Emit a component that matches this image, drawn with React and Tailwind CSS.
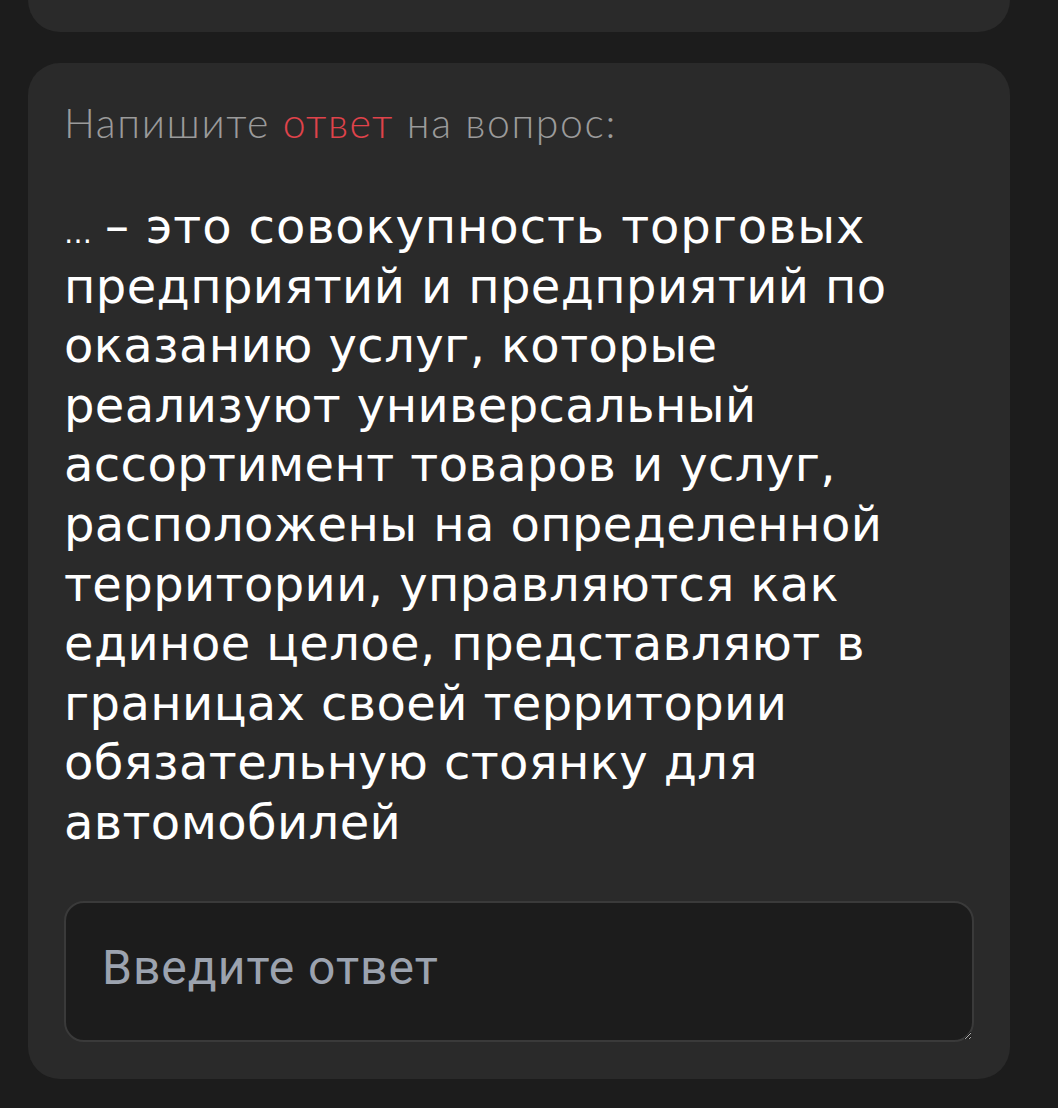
import React from 'react';

const lines = [
  'предприятий и предприятий по',
  'оказанию услуг, которые',
  'реализуют универсальный',
  'ассортимент товаров и услуг,',
  'расположены на определенной',
  'территории, управляются как',
  'единое целое, представляют в',
  'границах своей территории',
  'обязательную стоянку для',
  'автомобилей',
];

const App = () => {
  return (
    <div className="min-h-[1108px] bg-[#1c1c1c] px-[28px] pr-[48px] overflow-hidden">
      {/* previous card, only its bottom shows */}
      <div className="-mt-[60px] h-[92px] rounded-[32px] bg-[#2a2a2a]" />

      <div className="mt-[31px] rounded-[32px] bg-[#2a2a2a] px-[36px] pt-[36px] pb-[37px]">
        <p
          className="text-[41px] font-light leading-[48px] tracking-[1.6px] text-[#9b9b9b]"
          style={{ fontFamily: 'Lato, "Open Sans", sans-serif' }}
        >
          Напишите <span className="text-[#e0434b]">ответ</span> на вопрос:
        </p>

        <div
          className="mt-[50px] text-[48px] leading-[59.6px] tracking-[0.4px] text-white"
          style={{ fontFamily: '"DejaVu Sans", "Noto Sans", sans-serif' }}
        >
          <div className="h-[59.6px] whitespace-nowrap tracking-[0.9px]">
            <span className="mr-[14px] inline-block text-[28px] leading-[0] tracking-[-1px]">…</span>– это совокупность торговых
          </div>
          {lines.map((l) => (
            <div key={l} className="whitespace-nowrap">{l}</div>
          ))}
        </div>

        <textarea
          placeholder="Введите ответ"
          className="mt-[48px] block h-[141px] w-full rounded-[20px] border-2 border-[#3a3a3a] bg-[#1c1c1c] px-[36px] pt-[37px] text-[48px] leading-[56px] tracking-[1px] text-white outline-none placeholder:text-[#9ca3af]"
          style={{ fontFamily: 'Roboto, "Liberation Sans", sans-serif' }}
        />
      </div>
    </div>
  );
};

export default App;
